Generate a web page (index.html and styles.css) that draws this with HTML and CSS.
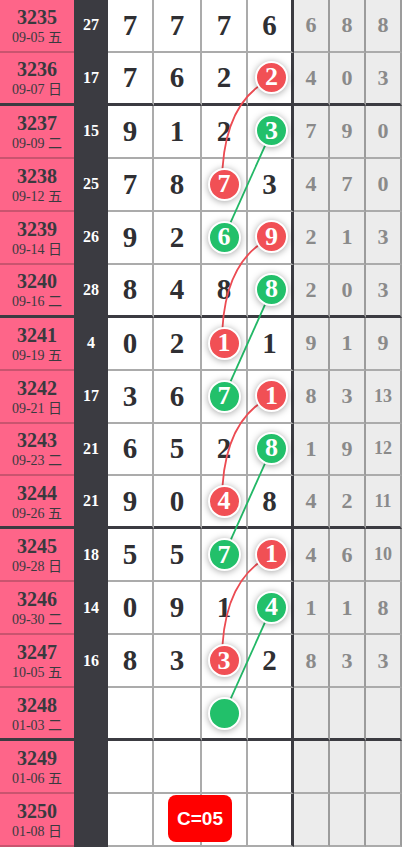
FILE: index.html
```html
<!DOCTYPE html>
<html>
<head>
    <meta charset="utf-8"/>
    <meta name="viewport" content="width=device-width,initial-scale=1">
    <title>走势图</title>
    <link rel="stylesheet" href="styles.css">
</head>
<body>
<div class="board">
    <div class="row">
        <div class="no">3235<small>09-05 五</small></div><div class="sum">27</div>
        <div class="d">7</div><div class="d">7</div><div class="d">7</div><div class="d last">6</div>
        <div class="g">6</div><div class="g">8</div><div class="g">8</div>
    </div>
    <div class="row sep">
        <div class="no">3236<small>09-07 日</small></div><div class="sum">17</div>
        <div class="d">7</div><div class="d">6</div><div class="d">2</div><div class="d last"><span class="ball red">2</span></div>
        <div class="g">4</div><div class="g">0</div><div class="g">3</div>
    </div>
    <div class="row">
        <div class="no">3237<small>09-09 二</small></div><div class="sum">15</div>
        <div class="d">9</div><div class="d">1</div><div class="d">2</div><div class="d last"><span class="ball green">3</span></div>
        <div class="g">7</div><div class="g">9</div><div class="g">0</div>
    </div>
    <div class="row">
        <div class="no">3238<small>09-12 五</small></div><div class="sum">25</div>
        <div class="d">7</div><div class="d">8</div><div class="d"><span class="ball red">7</span></div><div class="d last">3</div>
        <div class="g">4</div><div class="g">7</div><div class="g">0</div>
    </div>
    <div class="row">
        <div class="no">3239<small>09-14 日</small></div><div class="sum">26</div>
        <div class="d">9</div><div class="d">2</div><div class="d"><span class="ball green">6</span></div><div class="d last"><span class="ball red">9</span></div>
        <div class="g">2</div><div class="g">1</div><div class="g">3</div>
    </div>
    <div class="row sep">
        <div class="no">3240<small>09-16 二</small></div><div class="sum">28</div>
        <div class="d">8</div><div class="d">4</div><div class="d">8</div><div class="d last"><span class="ball green">8</span></div>
        <div class="g">2</div><div class="g">0</div><div class="g">3</div>
    </div>
    <div class="row">
        <div class="no">3241<small>09-19 五</small></div><div class="sum">4</div>
        <div class="d">0</div><div class="d">2</div><div class="d"><span class="ball red">1</span></div><div class="d last">1</div>
        <div class="g">9</div><div class="g">1</div><div class="g">9</div>
    </div>
    <div class="row">
        <div class="no">3242<small>09-21 日</small></div><div class="sum">17</div>
        <div class="d">3</div><div class="d">6</div><div class="d"><span class="ball green">7</span></div><div class="d last"><span class="ball red">1</span></div>
        <div class="g">8</div><div class="g">3</div><div class="g two">13</div>
    </div>
    <div class="row">
        <div class="no">3243<small>09-23 二</small></div><div class="sum">21</div>
        <div class="d">6</div><div class="d">5</div><div class="d">2</div><div class="d last"><span class="ball green">8</span></div>
        <div class="g">1</div><div class="g">9</div><div class="g two">12</div>
    </div>
    <div class="row sep">
        <div class="no">3244<small>09-26 五</small></div><div class="sum">21</div>
        <div class="d">9</div><div class="d">0</div><div class="d"><span class="ball red">4</span></div><div class="d last">8</div>
        <div class="g">4</div><div class="g">2</div><div class="g two">11</div>
    </div>
    <div class="row">
        <div class="no">3245<small>09-28 日</small></div><div class="sum">18</div>
        <div class="d">5</div><div class="d">5</div><div class="d"><span class="ball green">7</span></div><div class="d last"><span class="ball red">1</span></div>
        <div class="g">4</div><div class="g">6</div><div class="g two">10</div>
    </div>
    <div class="row">
        <div class="no">3246<small>09-30 二</small></div><div class="sum">14</div>
        <div class="d">0</div><div class="d">9</div><div class="d">1</div><div class="d last"><span class="ball green">4</span></div>
        <div class="g">1</div><div class="g">1</div><div class="g">8</div>
    </div>
    <div class="row">
        <div class="no">3247<small>10-05 五</small></div><div class="sum">16</div>
        <div class="d">8</div><div class="d">3</div><div class="d"><span class="ball red">3</span></div><div class="d last">2</div>
        <div class="g">8</div><div class="g">3</div><div class="g">3</div>
    </div>
    <div class="row sep">
        <div class="no">3248<small>01-03 二</small></div><div class="sum"></div>
        <div class="d"></div><div class="d"></div><div class="d"><span class="ball green"></span></div><div class="d last"></div>
        <div class="g"></div><div class="g"></div><div class="g"></div>
    </div>
    <div class="row">
        <div class="no">3249<small>01-06 五</small></div><div class="sum"></div>
        <div class="d"></div><div class="d"></div><div class="d"></div><div class="d last"></div>
        <div class="g"></div><div class="g"></div><div class="g"></div>
    </div>
    <div class="row">
        <div class="no">3250<small>01-08 日</small></div><div class="sum"></div>
        <div class="d"></div><div class="d"></div><div class="d"></div><div class="d last"></div>
        <div class="g"></div><div class="g"></div><div class="g"></div>
    </div>

    <!-- 连线 -->
    <svg class="lines" width="402" height="847" viewBox="0 0 402 847">
        <g fill="none" stroke="#ec4b52" stroke-width="1.8">
            <path d="M271.5 78.4 Q222 102 222 184.3"/>
            <path d="M271.5 237.2 Q222 261 222 343.1"/>
            <path d="M271.5 396.1 Q222 420 222 502"/>
            <path d="M271.5 554.9 Q222 579 222 660.8"/>
        </g>
        <g stroke="#22b866" stroke-width="1.8">
            <line x1="271.5" y1="131.3" x2="224" y2="237.2"/>
            <line x1="271.5" y1="290.2" x2="224" y2="396.1"/>
            <line x1="271.5" y1="449" x2="224" y2="554.9"/>
            <line x1="271.5" y1="607.8" x2="224" y2="713.7"/>
        </g>
    </svg>

    <div class="badge">C=05</div>
</div>
</body>
</html>
```

FILE: styles.css
```css
*{box-sizing:border-box;}
html,body{margin:0;padding:0;background:#fff;}
body{font-family:"Liberation Serif","Noto Sans CJK SC",serif;color:#333;}
.board{position:relative;width:402px;height:847px;display:flex;flex-direction:column;overflow:hidden;}
.row{flex:1;display:grid;grid-template-columns:74px 34px 46px 48px 46px 46px 36px 36px 36px;min-height:0;}
.row > div{display:flex;align-items:center;justify-content:center;border-bottom:2px solid #ababab;}

.no{flex-direction:column;background:#fe6589;border-bottom-color:#c9546f !important;font-size:20px;font-weight:bold;line-height:23px;color:#3a3a3f;padding-top:2px;}
.no small{font-size:14px;font-weight:normal;line-height:18px;font-family:"Liberation Serif","Noto Sans CJK SC",serif;}
.sum{background:#3b3b41;color:#fff;font-size:16px;font-weight:bold;border-bottom-color:#3b3b41 !important;}
.d{background:#fff;border-right:2px solid #ababab;font-size:29px;font-weight:bold;color:#2f2f33;}
.d.last{border-right:3px solid #3b3b41;}
.g{background:#ececec;border-right:2px solid #9c9c9c;font-size:22px;font-weight:bold;color:#8a8a8a;}
.g.two{font-size:18px;}

.sep > div{border-bottom:3px solid #3b3b41 !important;}

.ball{position:relative;z-index:2;width:33px;height:33px;border-radius:50%;border:2px solid #fff;display:flex;align-items:center;justify-content:center;color:#fff;font-size:26px;font-weight:bold;line-height:1;box-shadow:0 1px 7px rgba(0,0,0,0.35);}
.last .ball{margin-left:4px;margin-top:-1px;}
.red{background:#f15055;}
.green{background:#22c06a;}

.lines{position:absolute;top:0;left:0;z-index:1;pointer-events:none;}
.badge{position:absolute;z-index:3;left:168px;top:795px;width:64px;height:47px;border-radius:8px;background:#ff0000;color:#fff;font-family:"Liberation Sans",Arial,sans-serif;font-size:19px;font-weight:bold;display:flex;align-items:center;justify-content:center;}
```
